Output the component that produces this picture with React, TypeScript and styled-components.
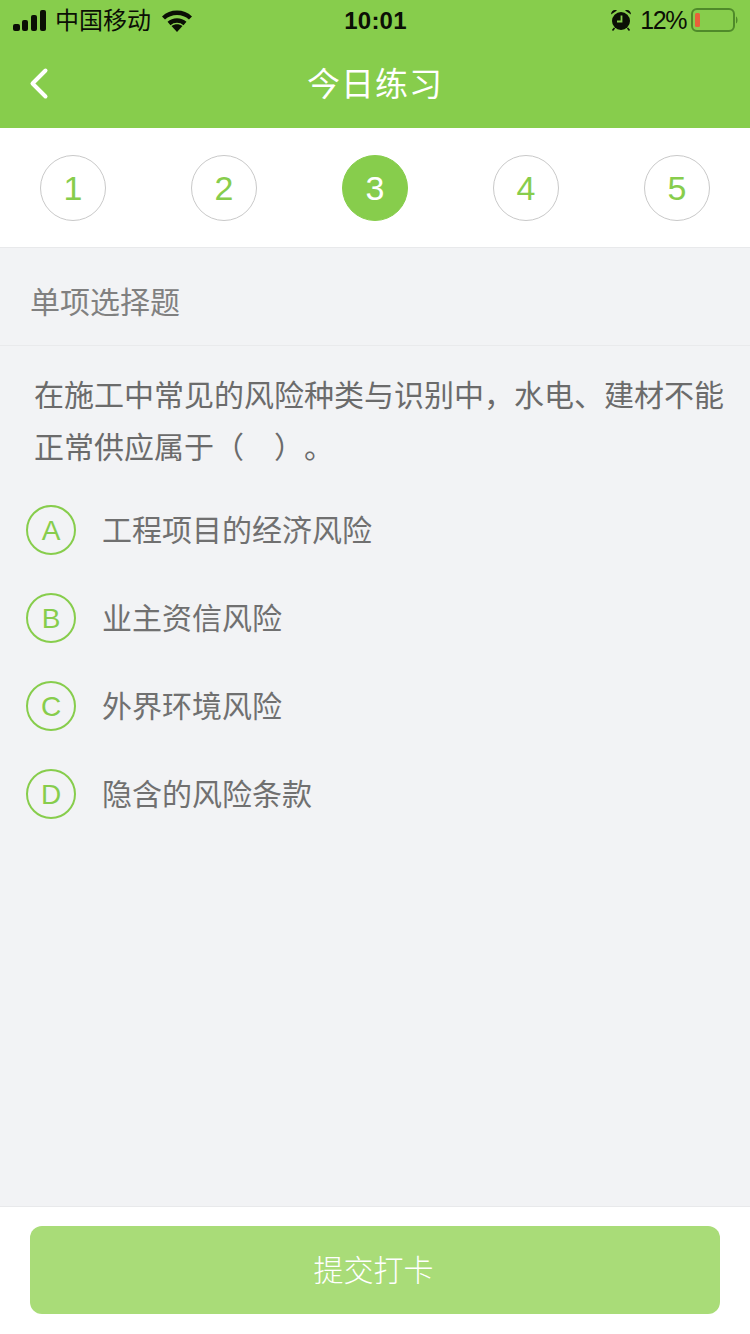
import styled, { createGlobalStyle } from "styled-components";

const GlobalStyle = createGlobalStyle`
  html, body {
    margin: 0;
    padding: 0;
    background: #f2f3f5;
  }
  * {
    box-sizing: border-box;
  }
`;

const FONT = `"Liberation Sans", "Noto Sans CJK SC", sans-serif`;
const GREEN = "#87cd4c";

const Page = styled.div`
  width: 750px;
  height: 1334px;
  display: flex;
  flex-direction: column;
  background: #f2f3f5;
  font-family: ${FONT};
  overflow: hidden;
`;

const Header = styled.header`
  height: 128px;
  background: ${GREEN};
  display: flex;
  flex-direction: column;
`;

const StatusBar = styled.div`
  height: 40px;
  display: grid;
  grid-template-columns: 1fr auto 1fr;
  align-items: center;
  padding: 1px 12px 0 13px;
  color: #0b0f05;
`;

const StatusLeft = styled.div`
  display: flex;
  align-items: center;
`;

const Carrier = styled.span`
  font-size: 24px;
  margin-left: 9px;
  margin-right: 11px;
  line-height: 30px;
`;

const Clock = styled.span`
  font-size: 24px;
  font-weight: 700;
  line-height: 30px;
  letter-spacing: 0.2px;
`;

const StatusRight = styled.div`
  display: flex;
  align-items: center;
  justify-content: flex-end;
  padding-bottom: 2px;
`;

const Percent = styled.span`
  font-size: 25px;
  line-height: 30px;
  letter-spacing: -1.4px;
  margin: 0 5px 0 9px;
`;

const NavBar = styled.div`
  position: relative;
  height: 88px;
  display: flex;
  align-items: center;
  justify-content: center;
  padding-bottom: 4px;
`;

const BackButton = styled.button`
  position: absolute;
  left: 28px;
  top: 27px;
  width: 24px;
  height: 34px;
  padding: 0;
  border: 0;
  background: none;
  display: block;
`;

const Title = styled.h1`
  margin: 0;
  font-size: 33px;
  font-weight: 400;
  line-height: 44px;
  color: #fff;
  letter-spacing: 1px;
  font-family: "Noto Sans CJK SC", sans-serif;
`;

const Stepper = styled.nav`
  height: 120px;
  background: #fff;
  border-bottom: 1px solid #e8e9eb;
  display: flex;
  justify-content: space-between;
  padding: 27px 40px 0;
`;

const Step = styled.div<{ $active?: boolean }>`
  width: 66px;
  height: 66px;
  border-radius: 50%;
  display: flex;
  align-items: center;
  justify-content: center;
  font-size: 34px;
  color: ${(p) => (p.$active ? "#fff" : GREEN)};
  background: ${(p) => (p.$active ? GREEN : "#fff")};
  border: 1px solid ${(p) => (p.$active ? GREEN : "#c9c9c9")};
`;

const SectionLabel = styled.div`
  height: 98px;
  padding: 6px 0 0 30px;
  border-bottom: 1px solid #e9eaec;
  display: flex;
  align-items: center;
  font-size: 30px;
  color: #808080;
`;

const Body = styled.main`
  flex: 1;
  display: flex;
  flex-direction: column;
`;

const Question = styled.p`
  margin: 24px 0 0;
  padding: 0 20px 0 34px;
  font-size: 30px;
  line-height: 52px;
  color: #6b6b6b;
  text-spacing-trim: space-all;
`;

const Options = styled.ul`
  list-style: none;
  margin: 31px 0 0;
  padding: 0 0 0 26px;
  display: flex;
  flex-direction: column;
  gap: 38px;
`;

const Option = styled.li`
  height: 50px;
  display: flex;
  align-items: center;
`;

const OptionMark = styled.span`
  width: 50px;
  height: 50px;
  padding-top: 2px;
  border: 2px solid ${GREEN};
  border-radius: 50%;
  display: flex;
  align-items: center;
  justify-content: center;
  font-size: 28px;
  color: ${GREEN};
  flex-shrink: 0;
`;

const OptionText = styled.span`
  margin-left: 26px;
  padding-bottom: 4px;
  font-size: 30px;
  color: #707070;
`;

const Footer = styled.footer`
  height: 128px;
  background: #fff;
  border-top: 1px solid #e8e9eb;
  padding: 19px 30px 0;
`;

const SubmitButton = styled.button`
  width: 690px;
  height: 88px;
  padding: 0 3px 4px 0;
  border: 0;
  border-radius: 12px;
  background: #a9dc78;
  color: #fff;
  font-size: 30px;
  font-weight: 300;
  font-family: "Noto Sans CJK SC", sans-serif;
`;

const SignalIcon = () => (
  <svg width="33" height="21" viewBox="0 0 33 21" fill="#0b0f05">
    <rect x="0" y="14" width="7" height="7" rx="2" />
    <rect x="9" y="10" width="6" height="11" rx="2" />
    <rect x="18" y="5" width="6" height="16" rx="2" />
    <rect x="27" y="0" width="6" height="21" rx="2" />
  </svg>
);

const WifiIcon = () => (
  <svg width="30" height="22" viewBox="0 0 30 22" fill="none" stroke="#0b0f05" strokeWidth="4.4">
    <path d="M1.5 8 C9 1 21 1 28.5 8" />
    <path d="M7 13.5 C11.5 9.5 18.5 9.5 23 13.5" />
    <path d="M9.5 16 L15 22 L20.5 16 C17 13.8 13 13.8 9.5 16 Z" fill="#0b0f05" stroke="none" />
  </svg>
);

const AlarmIcon = () => (
  <svg width="20" height="22" viewBox="0 0 20 22">
    <circle cx="10" cy="12" r="9" fill="#0b0f05" />
    <path d="M0 5.5 C0 2 3 0 6 1.5 Z M20 5.5 C20 2 17 0 14 1.5 Z" fill="#0b0f05" />
    <path d="M3.5 19 L1.5 21.5 M16.5 19 L18.5 21.5" stroke="#0b0f05" strokeWidth="1.6" />
    <path d="M10.5 6.5 V12.5 H6" fill="none" stroke={GREEN} strokeWidth="1.8" />
  </svg>
);

const BatteryIcon = () => (
  <svg width="47" height="24" viewBox="0 0 47 24" fill="none">
    <rect x="1" y="1" width="42" height="22" rx="5" stroke="#4f8a2a" strokeWidth="2" />
    <rect x="4" y="5" width="5" height="14" rx="1.5" fill="#e8603a" />
    <path d="M45 8.5 C47 9.5 47 14.5 45 15.5 Z" fill="#4f8a2a" />
  </svg>
);

const BackIcon = () => (
  <svg width="24" height="34" viewBox="0 0 24 34" fill="none">
    <path d="M17.5 3.5 L4.5 16.5 L17.5 29.5" stroke="#fff" strokeWidth="4" strokeLinecap="round" strokeLinejoin="round" />
  </svg>
);

const steps = [1, 2, 3, 4, 5];
const activeStep = 3;

const options = [
  { key: "A", text: "工程项目的经济风险" },
  { key: "B", text: "业主资信风险" },
  { key: "C", text: "外界环境风险" },
  { key: "D", text: "隐含的风险条款" },
];

const App = () => {
  return (
    <Page>
      <GlobalStyle />
      <Header>
        <StatusBar>
          <StatusLeft>
            <SignalIcon />
            <Carrier>中国移动</Carrier>
            <WifiIcon />
          </StatusLeft>
          <Clock>10:01</Clock>
          <StatusRight>
            <AlarmIcon />
            <Percent>12%</Percent>
            <BatteryIcon />
          </StatusRight>
        </StatusBar>
        <NavBar>
          <BackButton>
            <BackIcon />
          </BackButton>
          <Title>今日练习</Title>
        </NavBar>
      </Header>
      <Stepper>
        {steps.map((step) => (
          <Step key={step} $active={step === activeStep}>
            {step}
          </Step>
        ))}
      </Stepper>
      <Body>
        <SectionLabel>单项选择题</SectionLabel>
        <Question>在施工中常见的风险种类与识别中，水电、建材不能正常供应属于（　）。</Question>
        <Options>
          {options.map((option) => (
            <Option key={option.key}>
              <OptionMark>{option.key}</OptionMark>
              <OptionText>{option.text}</OptionText>
            </Option>
          ))}
        </Options>
      </Body>
      <Footer>
        <SubmitButton>提交打卡</SubmitButton>
      </Footer>
    </Page>
  );
};

export default App;
